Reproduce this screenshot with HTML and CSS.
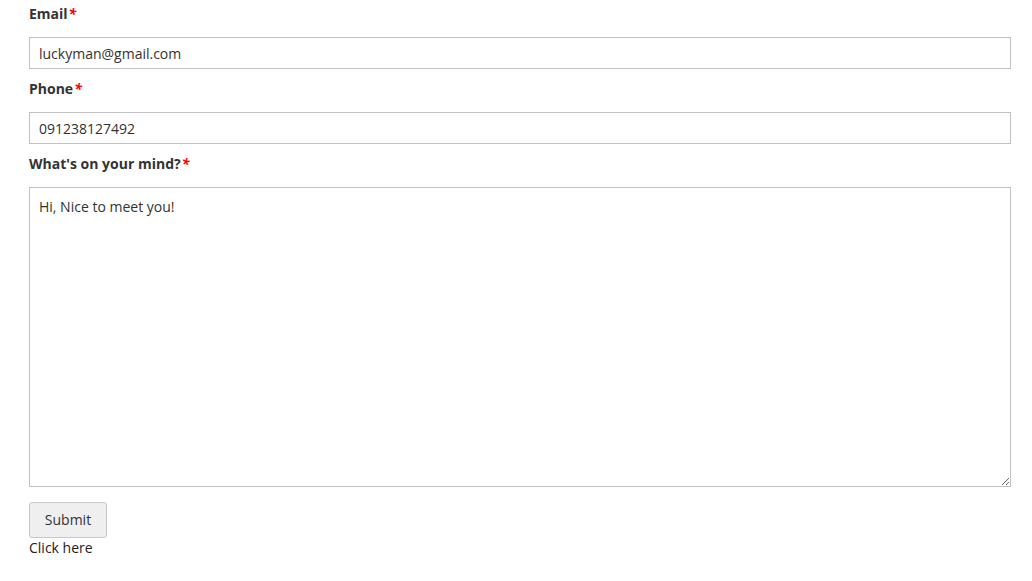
FILE: index.html
```html
<!DOCTYPE html>
<html>
<head>
<meta charset="utf-8">
<link rel="stylesheet" href="styles.css">
</head>
<body>
<form class="form">
  <div class="group">
    <label class="label">Email<span class="req">*</span></label>
    <input class="field" type="text" value="luckyman@gmail.com">
  </div>
  <div class="group">
    <label class="label">Phone<span class="req">*</span></label>
    <input class="field" type="text" value="091238127492">
  </div>
  <div class="group group-last">
    <label class="label">What's on your mind?<span class="req">*</span></label>
    <textarea class="field area">Hi, Nice to meet you!</textarea>
  </div>
  <button class="btn" type="button">Submit</button>
  <div class="click">Click here</div>
</form>
</body>
</html>
```

FILE: styles.css
```css
html, body {
  margin: 0;
  padding: 0;
  background: #fff;
}
body {
  font-family: "Open Sans", "Liberation Sans", sans-serif;
  font-size: 14px;
  color: #333;
}
.form {
  padding: 4px 22px 0 29px;
}
.group {
  margin-bottom: 10px;
}
.group-last {
  margin-bottom: 15px;
}
.label {
  display: block;
  font-weight: bold;
  line-height: 20px;
  margin-bottom: 13px;
  color: #333;
}
.req {
  color: #f00;
  font-style: italic;
  margin-left: 1px;
}
.field {
  display: block;
  box-sizing: border-box;
  width: 982px;
  height: 32px;
  margin: 0;
  padding: 0 9px;
  border: 1px solid #c2c2c2;
  border-radius: 0;
  font-family: "Open Sans", "Liberation Sans", sans-serif;
  font-size: 14px;
  color: #333;
  background: #fff;
  outline: none;
}
.area {
  height: 300px;
  padding: 9px 9px;
  line-height: 20px;
  resize: both;
}
.btn {
  display: block;
  box-sizing: border-box;
  width: 78px;
  height: 36px;
  margin: 0;
  padding: 0 0 2px;
  border: 1px solid #c8c8c8;
  border-radius: 3px;
  background: #efefef;
  font-family: "Open Sans", "Liberation Sans", sans-serif;
  font-size: 14px;
  color: #333;
}
.click {
  line-height: 20px;
  color: #222;
}
```
